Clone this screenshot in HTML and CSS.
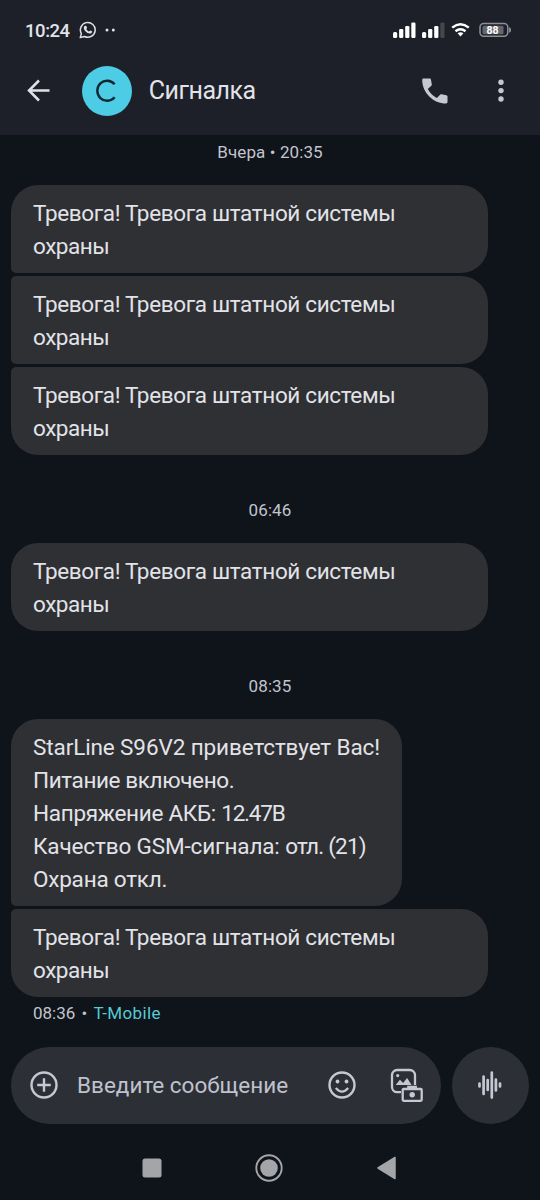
FILE: index.html
```html
<!DOCTYPE html>
<html lang="ru">
<head>
<meta charset="utf-8">
<title>Сигналка</title>
<link rel="stylesheet" href="styles.css">
</head>
<body>
<div class="phone">
  <header class="top">
    <div class="status">
      <span class="clock">10:24</span>
      <svg class="whatsapp" width="18" height="18" viewBox="0 0 18 18"><path d="M1.2 16.6l1.2-4A7.4 7.4 0 1 1 5.5 15.5z" fill="none" stroke="#dfe1e8" stroke-width="1.5" stroke-linejoin="round"/><path d="M6.3 4.8l1 .1.8 1.9-.8 1.1c.7 1.3 1.6 2.1 2.8 2.6l1-1.1 2 .9c.1 1.7-1.1 2.4-2.4 2.3-3-.4-5.700-3.100-5.900-5.600 0-1 .5-1.900 1.500-2.200z" fill="#dfe1e8"/></svg>
      <svg class="more" width="12" height="4" viewBox="0 0 12 4"><circle cx="2" cy="2" r="1.5" fill="#dfe1e8"/><circle cx="8.300" cy="2" r="1.500" fill="#dfe1e8"/></svg>
      <svg class="signals" width="120" height="18" viewBox="0 0 120 18">
        <g fill="#fff"><rect x="0" y="11" width="4.200" height="6" rx="1.500"/><rect x="6.100" y="8" width="4.200" height="9" rx="1.200"/><rect x="12.200" y="5" width="4.200" height="12" rx="1.200"/><rect x="18.300" y="1.500" width="4.200" height="15.500" rx="1.200"/>
        <rect x="29" y="11" width="4.200" height="6" rx="1.500"/><rect x="35.100" y="8" width="4.200" height="9" rx="1.200"/><rect x="41.200" y="5" width="4.200" height="12" rx="1.200"/></g>
        <rect x="47.300" y="1.500" width="4.200" height="15.500" rx="1.200" fill="#45474d"/>
        <g fill="none" stroke="#fff" stroke-width="2.500"><path d="M59.200 6.600Q67.500-.2 75.800 6.600"/><path d="M62.500 10.200q5-4 10 0"/></g><path d="M64.600 12.300q2.900-2.200 5.800 0L67.500 15.400z" fill="#fff"/>
        <rect x="87" y="2.500" width="27.800" height="12.800" rx="3.800" fill="none" stroke="#8c8f96" stroke-width="1.500"/>
        <rect x="89.500" y="4.700" width="21" height="8.500" rx="1.500" fill="#63666d"/><path d="M116.700 6.700q2 2.300 0 4.600z" fill="#8c8f96" stroke="#8c8f96"/>
        <text class="battery" x="99.500" y="13" text-anchor="middle">88</text>
      </svg>
    </div>
    <div class="appbar">
      <svg class="back" width="24" height="24" viewBox="0 0 24 24" fill="none" stroke="#dfe1e9" stroke-width="2.500"><path d="M22.500 11.500H2.500M12 1.500 2 11.500l10 10"/></svg>
      <span class="avatar"><svg width="22" height="24" viewBox="0 0 22 24"><path d="M18.600 5.300A9.800 10 0 1 0 18.600 18.200" fill="none" stroke="#10282f" stroke-width="2.400"/></svg></span>
      <h1 class="title">Сигналка</h1>
      <svg class="call" width="26" height="26" viewBox="0 0 26 26"><path d="M1.400.5h6.200c.8 0 1.300.5 1.400 1.200l.8 4.700c.1.600-.1 1-.5 1.400L5.800 11c2.100 4 5.100 7 9.100 9.100l3.400-3.500c.4-.4.900-.5 1.400-.4l4.600 1c.7.100 1.200.600 1.200 1.400v5.500c0 .8-.6 1.400-1.400 1.400C11.300 25.500.2 14.400.2 1.900.2 1.100.7.500 1.400.5z" fill="#c5c8d3"/></svg>
      <svg class="menu" width="6" height="24" viewBox="0 0 6 24" fill="#c5c8d3"><circle cx="3" cy="3.200" r="2.700"/><circle cx="3" cy="11.600" r="2.700"/><circle cx="3" cy="20" r="2.700"/></svg>
    </div>
  </header>
  <main class="chat">
    <time class="stamp stamp-first">Вчера • 20:35</time>
    <section class="group">
      <p class="bubble joins-next"><span class="alarm">Тревога! Тревога штатной системы</span><br><span class="guard">охраны</span></p>
      <p class="bubble joins-prev joins-next"><span class="alarm">Тревога! Тревога штатной системы</span><br><span class="guard">охраны</span></p>
      <p class="bubble joins-prev"><span class="alarm">Тревога! Тревога штатной системы</span><br><span class="guard">охраны</span></p>
    </section>
    <time class="stamp">06:46</time>
    <section class="group">
      <p class="bubble"><span class="alarm">Тревога! Тревога штатной системы</span><br><span class="guard">охраны</span></p>
    </section>
    <time class="stamp">08:35</time>
    <section class="group">
      <p class="bubble report joins-next"><span class="greeting">StarLine S96V2 приветствует Вас!</span><br><span class="power">Питание включено.</span><br><span class="voltage">Напряжение АКБ: <span class="value">12.47В</span></span><br><span class="gsm">Качество GSM-сигнала: <span class="value">отл. (21)</span></span><br><span class="security">Охрана откл.</span></p>
      <p class="bubble joins-prev"><span class="alarm">Тревога! Тревога штатной системы</span><br><span class="guard">охраны</span></p>
    </section>
    <div class="meta">08:36 <span class="dot">•</span> <span class="carrier">T-Mobile</span></div>
  </main>
  <footer class="composer">
    <div class="field">
      <svg width="28" height="28" viewBox="0 0 28 28" fill="none" stroke="#c5c8d3" stroke-width="2.400"><circle cx="14" cy="14" r="12.500"/><path d="M14 7.200v13.600M7.200 14h13.600"/></svg>
      <span class="hint">Введите сообщение</span>
      <svg class="smile" width="28" height="28" viewBox="0 0 28 28" fill="none" stroke="#c5c8d3" stroke-width="2.400"><circle cx="14" cy="14" r="12.500"/><path d="M7.800 17q6.200 7.200 12.400 0" stroke-width="2.200"/><g fill="#c5c8d3" stroke="none"><circle cx="9.500" cy="10.500" r="1.900"/><circle cx="18.500" cy="10.500" r="1.900"/></g></svg>
      <svg class="gallery" width="34" height="34" viewBox="0 0 34 34" fill="none" stroke="#c5c8d3" stroke-width="2.300"><path d="M11 24.200H7.200a5.200 5.200 0 0 1-5.200-5.200V7.200A5.200 5.200 0 0 1 7.200 2h12.600A5.200 5.200 0 0 1 25 7.200V17"/><path d="M5.700 17l4.200-5.300 3.200 3.300 4-4.900 4.500 6.900z" fill="#c5c8d3" stroke="none"/><circle cx="7.700" cy="7.600" r="1.600" fill="#c5c8d3" stroke="none"/><rect x="12.700" y="21" width="19" height="11.800" rx="1"/><path d="M18.300 20.500v-1.500h7.500v1.500"/><circle cx="22.200" cy="26.800" r="2.700" fill="#c5c8d3" stroke="none"/></svg>
    </div>
    <div class="voice"><svg width="26" height="30" viewBox="0 0 26 30" stroke="#c5c8d3" stroke-width="2.700" stroke-linecap="round"><path d="M2.500 13.500v3M6.600 6.700v17.200M10.700 10v10M14.800 2.600v25M18.900 9.600v10.800M23 13.500v3"/></svg></div>
  </footer>
  <nav class="nav">
    <svg width="20" height="20" viewBox="0 0 20 20"><rect x=".5" y=".5" width="19" height="19" rx="2.500" fill="#a4a5a8"/></svg>
    <svg width="28" height="28" viewBox="0 0 28 28"><circle cx="14" cy="14" r="12.700" fill="none" stroke="#a4a5a8" stroke-width="1.900"/><circle cx="14" cy="14" r="8.800" fill="#a4a5a8"/></svg>
    <svg width="20" height="24" viewBox="0 0 20 24"><path d="M18 1.500v21L1 12z" fill="#a4a5a8" stroke="#a4a5a8" stroke-width="1.500" stroke-linejoin="round"/></svg>
  </nav>
</div>
</body>
</html>
```
FILE: styles.css
```css
* { box-sizing: border-box; }
body { margin: 0; background: #0f131a; color: #e2e3e8; font-family: Roboto, "Open Sans", sans-serif; }
svg { display: block; flex: none; }
.phone { width: 540px; height: 1200px; display: flex; flex-direction: column; overflow: hidden; white-space: nowrap; }
.top { height: 134.500px; background: #1d2028; flex: none; }
.status { height: 60px; padding: 0 27px 0 25px; display: flex; align-items: center; }
.clock { font-size: 18.500px; font-weight: 500; letter-spacing: -.45px; width: 54px; padding-top: 2px; }
.more { margin-left: 8px; }
.signals { margin-left: auto; }
.battery { font: 700 10.500px Roboto, sans-serif; fill: #fff; }
.appbar { height: 62px; padding: 0 36px 0 27px; display: flex; align-items: center; }
.avatar { width: 50px; height: 50px; border-radius: 50%; background: #4dcce5; margin-left: 31.300px; display: flex; align-items: center; justify-content: center; }
.title { margin: 0 0 0 16.500px; font-size: 25px; font-weight: 400; letter-spacing: -.5px; position: relative; top: -1px; }
.call { margin-left: auto; }
.menu { margin-left: 50px; }
.chat { display: flex; flex-direction: column; height: 912.500px; flex: none; }
.stamp { height: 88px; line-height: 20px; padding-top: 44.500px; text-align: center; font-size: 17px; letter-spacing: .1px; color: #c2c5ce; }
.stamp-first { height: 50.800px; padding-top: 7.500px; }
.group { display: flex; flex-direction: column; align-items: flex-start; gap: 3px; padding-left: 11px; }
.bubble { margin: 0; width: 477px; padding: 11.400px 22px 10.600px; border-radius: 27px; background: #2f3034; font-size: 22.500px; line-height: 33px; }
.report { width: 391px; }
.joins-next { border-bottom-left-radius: 5px; }
.joins-prev { border-top-left-radius: 5px; }
.alarm { letter-spacing: -.35px; }
.guard { letter-spacing: -.45px; }
.greeting { letter-spacing: -.11px; }
.power { letter-spacing: -.38px; }
.voltage { letter-spacing: -.3px; }
.voltage .value { letter-spacing: -1.200px; }
.gsm { letter-spacing: -.13px; }
.gsm .value { letter-spacing: -.8px; }
.security { letter-spacing: -.22px; }
.meta { padding: 5.500px 0 0 33px; font-size: 17px; line-height: 20px; color: #c2c5ce; }
.dot { margin: 0 2px 0 2px; }
.carrier { color: #55cbd5; letter-spacing: .4px; }
.composer { height: 77px; display: flex; gap: 11px; padding: 0 11px; flex: none; }
.field { width: 430px; height: 77px; border-radius: 39px; background: #2d2f37; display: flex; align-items: center; padding: 0 17px 1px 19px; }
.hint { margin-left: 19px; font-size: 22.500px; color: #bfc2cc; }
.smile { margin-left: auto; }
.gallery { margin-left: 34px; }
.voice { width: 77px; height: 77px; border-radius: 50%; background: #2d2f37; display: flex; align-items: center; justify-content: center; padding: 0 2px 1px 0; }
.nav { height: 76px; padding: 11px 143px 0 141.500px; display: flex; align-items: center; justify-content: space-between; }
```
